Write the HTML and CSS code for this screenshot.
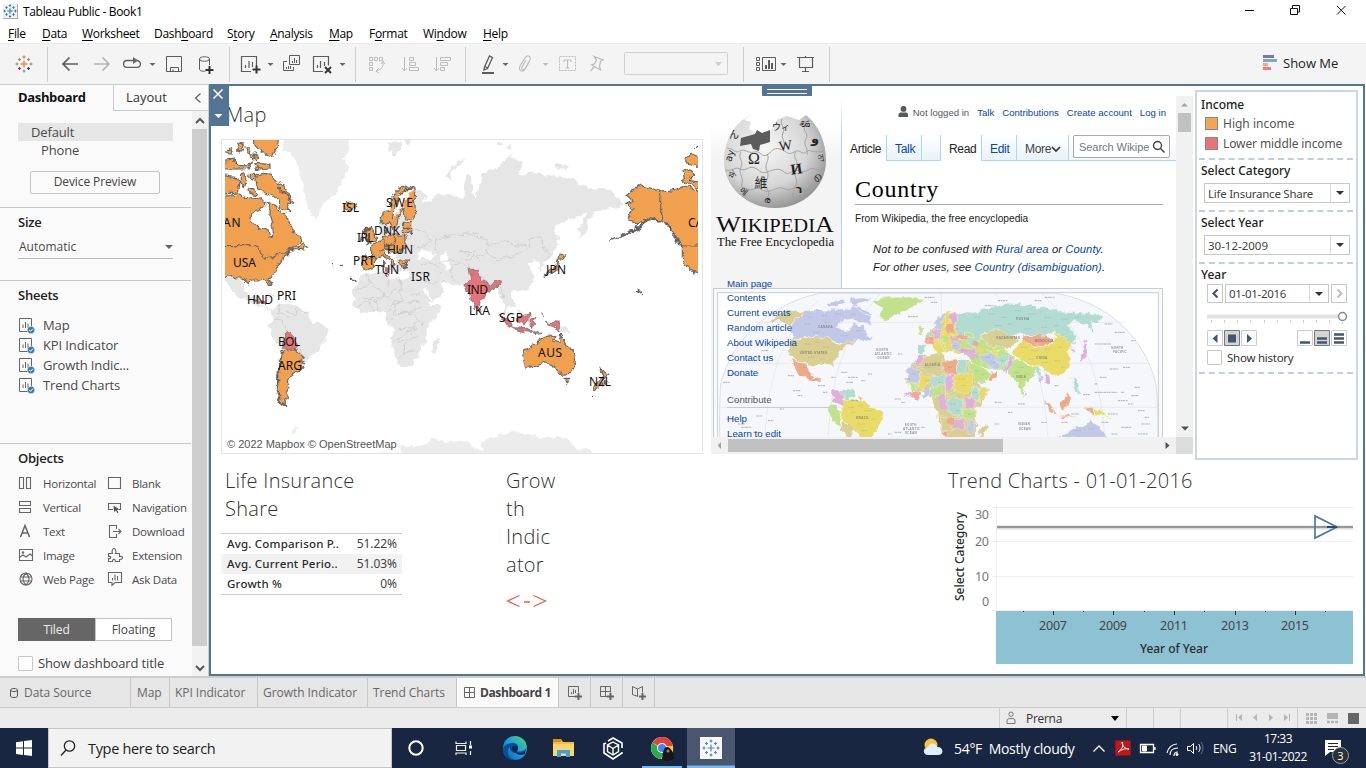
FILE: index.html
```html
<!DOCTYPE html>
<html lang="en">
<head>
<meta charset="utf-8">
<title>Tableau Public - Book1</title>
<link rel="stylesheet" href="styles.css">
</head>
<body>
<svg width="0" height="0" class="defs">
  <defs>
    <symbol id="plusmark" viewBox="0 0 18 18">
      <path d="M9 5.500v7M5.500 9h7M9 .5v3M7.500 2h3M9 14.500v3M7.500 16h3M2 7.500v3M.5 9h3M16 7.500v3M14.500 9h3M4.500 3v3M3 4.500h3M13.500 3v3M12 4.500h3M4.500 12v3M3 13.500h3M13.500 12v3M12 13.500h3"/>
    </symbol>
    <symbol id="sheet" viewBox="0 0 18 18">
      <path d="M1.500 1.500h12v13h-12zM5 11V7.500M7.500 11V5M10 11V6.500" fill="none" stroke="#666"/>
      <circle cx="13" cy="13" r="3.800" fill="#3a7ca5" stroke="#fafafa" stroke-width=".6"/>
      <path d="M11.300 13l1.300 1.300 2.200-2.500" fill="none" stroke="#fff"/>
    </symbol>
    <filter id="coast" x="0" y="0" width="1" height="1" color-interpolation-filters="sRGB"><feTurbulence type="fractalNoise" baseFrequency=".045" numOctaves="3" seed="4"/><feDisplacementMap in="SourceGraphic" scale="22" xChannelSelector="R" yChannelSelector="G"/></filter>
  </defs>
</svg>

<header class="titlebar">
  <span class="appicon"><svg width="14" height="14"><use href="#plusmark"/></svg></span>
  <span class="apptitle">Tableau Public - Book1</span>
  <svg class="winbtns" width="110" height="22" viewBox="1240 0 110 22"><path d="M1245 10.500h9M1290.500 8.500h7v6h-7zM1292.500 8v-2.500h7v6.500h-2M1337 6l8.500 8.500M1345.500 6l-8.500 8.500" fill="none" stroke="#111"/></svg>
</header>
<nav class="menubar"><span><u>F</u>ile</span><span><u>D</u>ata</span><span><u>W</u>orksheet</span><span>Dash<u>b</u>oard</span><span>S<u>t</u>ory</span><span><u>A</u>nalysis</span><span><u>M</u>ap</span><span>F<u>o</u>rmat</span><span>Wi<u>n</u>dow</span><span><u>H</u>elp</span></nav>

<div class="toolbar">
  <div class="tg g1"><svg width="18" height="18" viewBox="0 0 18 18" fill="none" stroke-width="1.200"><path d="M9 5.500v7M5.500 9h7" stroke="#eb8a44" stroke-width="1.500"/><path d="M9 .5v3M7.500 2h3M2 7.500v3M.5 9h3" stroke="#7199a6"/><path d="M4.500 3v3M3 4.500h3M13.500 3v3M12 4.500h3" stroke="#e8762d"/><path d="M4.500 12v3M3 13.500h3" stroke="#c72035"/><path d="M13.500 12v3M12 13.500h3" stroke="#1f457e"/><path d="M16 7.500v3M14.500 9h3M9 14.500v3M7.500 16h3" stroke="#7099a6"/></svg></div>
  <div class="tg g2"><svg width="181" height="40" viewBox="48 44 181 40" fill="none" stroke="#5c5c5c">
    <path d="M63 64h15M69.500 57.500L63 64l6.500 6.500" stroke-width="1.700"/>
    <path d="M94 64h15M102.500 57.500l6.500 6.500-6.500 6.500" stroke="#b5b5b5" stroke-width="1.700"/>
    <path d="M132 60.500h-5a3.400 3.400 0 0 0 0 6.800h10a3.400 3.400 0 0 0 0-6.800h-6" stroke-width="1.300"/><path d="M133 57l5 3.500-5 3.500z" fill="#666" stroke="none"/>
    <path d="M149.500 63h6l-3 3z" fill="#666" stroke="none"/>
    <path d="M166.500 56.500h15v15h-15zM170.500 71.500v-4h8v4M173 71.500v-2"/>
    <path d="M199.500 59v10c0 2 3 2.500 6 2M209.500 59v6M199.500 59c0-3 10-3 10 0s-10 3-10 0"/><path d="M209.500 66v8M205.500 70h8" stroke="#333" stroke-width="2"/></svg></div>
  <div class="tg g3"><svg width="125" height="40" viewBox="230 44 125 40" fill="none" stroke="#5c5c5c">
    <path d="M251 71.500h-9.500v-15h15v10M245.500 68v-3M249 68v-7M252.500 67v-5" stroke-width="1.200"/><path d="M256.500 65.500v8M252.500 69.500h8" stroke="#333" stroke-width="2"/>
    <path d="M267.500 63h6l-3 3z" fill="#666" stroke="none"/>
    <path d="M289.500 55.500h10v9h-10zM292.500 63v-2M294.500 63v-5M296.500 63v-3M287 61.500h-3.500v9h10V67M286.500 69v-2M288.500 69v-3M290.500 69v-3"/>
    <path d="M323 71.500h-9.500v-15h15v9M317.500 68v-3M320.500 68v-7M324.500 66v-4" stroke-width="1.200"/><path d="M325 67l6 6M331 67l-6 6" stroke="#333" stroke-width="1.900"/>
    <path d="M339.500 63h6l-3 3z" fill="#666" stroke="none"/></svg></div>
  <div class="tg g4"><svg width="109" height="40" viewBox="356 44 109 40" fill="none" stroke="#bdbdbd">
    <path d="M369.500 57.500h3v3h-3zM374.500 57.500h3v3h-3zM379.500 57.500h3v3h-3zM369.500 62.500h3v3h-3zM369.500 67.500h3v3h-3zM383 62c1 4-2 8-7 9M381 64l2-3 2 3M379 68l-3 3 3 2"/>
    <path d="M404.500 57v14M402 68l2.500 3 2.500-3M409.500 57.500h4v3h-4zM409.500 62.500h6v3h-6zM409.500 67.500h9v3h-9z"/>
    <path d="M436.500 57v14M434 68l2.500 3 2.500-3M440.500 57.500h10v3h-10zM440.500 62.500h7v3h-7zM440.500 67.500h4v3h-4z"/></svg></div>
  <div class="tg g5"><svg width="277" height="40" viewBox="466 44 277 40" fill="none" stroke="#bdbdbd">
    <path d="M484.500 67l5-11 3 1.500-5 11-3.500 1.500zM484.500 66l3 2" stroke="#5c5c5c" stroke-width="1.300"/><path d="M482 73h12" stroke="#5c5c5c" stroke-width="2"/>
    <path d="M502.500 63h6l-3 3z" fill="#666" stroke="none"/>
    <path d="M526 60l-4 7c-1 3 1.500 4 3 1.500l5-8.500c1.500-4-3-5.500-5-2l-5 8c-2 5 3 7 5.500 2.500l4-7.500" stroke-width="1.200"/>
    <path d="M542.500 63h6l-3 3z" fill="#bdbdbd" stroke="none"/>
    <path d="M559.500 56.500h16v14h-16z" stroke-dasharray="2 1"/><path d="M564 62v-2h7v2M567.500 60v8M565.500 68h4"/>
    <path d="M594 56.500l9 3.500-2.500 1.500-1 5 1 3.500-9-5 3-1 2-4zM594.500 66.500l-4 4.500" stroke-width="1.300"/>
    <rect x="624.500" y="52.500" width="103" height="22" rx="1" stroke="#d0d0d0"/><path d="M715 62h7l-3.500 4z" fill="#ccc" stroke="none"/></svg></div>
  <div class="tg g6"><svg width="85" height="40" viewBox="744 44 85 40" fill="none" stroke="#5c5c5c">
    <path d="M756.500 57.500h3v3h-3zM756.500 62.500h3v3h-3zM756.500 67.500h3v3h-3zM762.500 57.500h13v13h-13z"/><path d="M766 69v-4M769 69v-9M772 69v-6" stroke-width="2"/>
    <path d="M780.500 63h6l-3 3z" fill="#666" stroke="none"/>
    <path d="M797 57.500h17M805.500 56v1.500M799.500 58v9.500h13V58M805.500 67.500v4M802 71.500h7" stroke-width="1.200"/></svg></div>
  <div class="showme"><svg width="14" height="16"><path d="M0 1.500h11" stroke="#8074a0" stroke-width="3"/><path d="M0 5.500h14" stroke="#7ba7cc" stroke-width="3"/><path d="M0 9.500h5" stroke="#f9a57a" stroke-width="3"/><path d="M0 13.500h8" stroke="#fc7484" stroke-width="3"/></svg><span>Show Me</span></div>
</div>

<main class="work">
  <aside class="left">
    <div class="ltabs"><b>Dashboard</b><span>Layout</span><svg width="8" height="12"><path d="M6.500 1.500L1.500 6l5 4.500" fill="none" stroke="#666" stroke-width="1.300"/></svg></div>
    <div class="lbody">
      <div class="lcontent">
        <section class="devices"><div class="def">Default</div><div class="phone">Phone</div><button class="dp">Device Preview</button></section>
        <section class="size"><h3>Size</h3><div class="auto"><span>Automatic</span><i class="tri"></i></div></section>
        <section class="sheets"><h3>Sheets</h3>
          <div class="srow"><svg width="18" height="18"><use href="#sheet"/></svg><span>Map</span></div>
          <div class="srow"><svg width="18" height="18"><use href="#sheet"/></svg><span>KPI Indicator</span></div>
          <div class="srow"><svg width="18" height="18"><use href="#sheet"/></svg><span>Growth Indic...</span></div>
          <div class="srow"><svg width="18" height="18"><use href="#sheet"/></svg><span>Trend Charts</span></div>
        </section>
        <section class="objects"><h3>Objects</h3>
          <div class="ogrid">
            <svg width="16" height="16"><path d="M1.500 2.500h4v11h-4zM8.500 2.500h4v11h-4z"/></svg><span>Horizontal</span><svg width="16" height="16"><path d="M1.500 2.500h12v11h-12z"/></svg><span>Blank</span>
            <svg width="16" height="16"><path d="M1.500 2.500h11v4h-11zM1.500 9.500h11v4h-11z"/></svg><span>Vertical</span><svg width="16" height="16"><path d="M6 10.500H1.500v-6h12v6H12"/><path d="M6.500 6.500l6 4-2.500.5 1.500 2.500-1.200.6-1.300-2.600-2 1.500z" fill="#555" stroke="none"/></svg><span>Navigation</span>
            <svg width="16" height="16"><path d="M2.500 14L7 2.500 11.500 14M4 10h6" stroke-width="1.500"/></svg><span>Text</span><svg width="16" height="16"><path d="M9.500 6V2.500h-7v12h7V11M6 8.500h8M11.500 6l2.500 2.500L11.500 11"/></svg><span>Download</span>
            <svg width="16" height="16"><path d="M1.500 2.500h13v11h-13zM2 10l3-2 3 2 4-3 2.500 2"/><circle cx="5" cy="5.500" r=".7"/></svg><span>Image</span><svg width="16" height="16"><path d="M1.500 6.500h4c-1-2 0-5 1.500-5s2.500 3 1.500 5h4v3c4-1 4 3 0 3v2h-4c0-3-3-3-3 0h-4v-3c3 1 3-3 0-2z"/></svg><span>Extension</span>
            <svg width="16" height="16"><circle cx="8" cy="8" r="6"/><path d="M8 2c-4 4-4 8 0 12M8 2c4 4 4 8 0 12M2.500 6h11M2.500 10h11"/></svg><span>Web Page</span><svg width="16" height="16"><path d="M1.500 1.500h13v10H8l-3 3v-3H1.500zM5.500 9.500V7M8 9.500v-6M10.500 9.500V5"/></svg><span>Ask Data</span>
          </div>
          <div class="toggle"><span class="on">Tiled</span><span>Floating</span></div>
          <div class="sdt"><i class="cb"></i><span>Show dashboard title</span></div>
        </section>
      </div>
      <div class="lscroll"><svg width="10" height="7"><path d="M1 6l4-4 4 4" /></svg><i></i><svg width="10" height="7"><path d="M1 1l4 4 4-4"/></svg></div>
    </div>
  </aside>

  <div class="canvas">
    <div class="grip"><i></i><i></i></div>
    <div class="corner"><svg width="20" height="42"><path d="M4.500 5.500l9 9M13.500 5.500l-9 9" stroke="#fff" stroke-width="1.500"/><path d="M5.500 30h8l-4 4z" fill="#fff"/></svg></div>
    <div class="top">
      <section class="mapsec">
        <h2>Map</h2>
        <div class="mapbox">
<svg width="473" height="313" viewBox="225 140 473 313"><g transform="translate(220 95) scale(.33333)"><g filter="url(#coast)">
<path d="M-40 60h1560v1100h-1560z" fill="#fff"/>
<g fill="#e6e6e6">
<path d="M200 115l-12 50 22 5 22 30 4 40 14 20 8 60 17 40 17 18 8-38 40-40 22-30 23-55-13-25 18-30-5-45z" fill="#ececec"/>
<path d="M5 545l22-3 15 13 20 0 13 13 3 27 14 11 13-6 15 10-10 10 20 15 15 5 15 5-5 5-35-18-60-22-20-20-15-25z"/>
<path d="M125 588l28 4 18 12-22-6zM160 645l18-17 22 2 35 5 27 20 10 25 28 5 25 15-3 25-14 15-6 25-32 20-8 15-12 15-5 10-45 5-10-70-25-20-20-50 13-20z"/>
<path d="M418 545l22-10 60-5 2 20 28-2 15 7 25-5 30 5 10 35 20 40 32 0-7 25-35 45-2 40-18 20-8 30-17 22-35 5-12-27-16-50 8-40-20-20-2-25-28-7-40 7-30-25-2-40 14-30z"/>
<path d="M655 725l5 15-15 35-8-5 3-30zM505 150l25-15 12 5-5 25-15 22zM672 250l28-40 30-22 5 7-35 30-10 35zM550 130l28-2-8 20-18 0z"/>
<path d="M583 290l18-5 22 22-16 17 20-6 33-23 40 5 25 10 15-5-10-25 10-40 12-5 8 85 30-80 40-20 40-40 35 20-5 40 50-10 30 15 25-5 55 15 50 25 50 0 40 30 10 20-20 10-30 5-40 5-10 20-15 40-15 25-2-35 17-30 10-15-55 15-30 15-20 25 20 15-5 25-20 30-20 25-10 25-5-20-20-15-20 15 15 20 5 30-20 25-35 5-20 10 20 20-5 20-22-8 0 30 10 15-14-15-10-60-20-20-70-10-36 0-40-5-20-10 15 30-20 22-50 20-15-30-20-45-5-25-55-5 0-18 25-7-12-28-26-30-20 10 10-60 16-5z"/>
<path d="M1017 690l25 3 10 20-35-2zM833 137l20 0-5 12-15-3zM855 155l20-5-2 15-14-3zM1002 210l50 0-20 12-25-3zM895 640l12 10 10 18-15-5z"/>
<path d="M470 1100l0-25 60-28 60 12 60-27 25 8 55-2 60 32-10-30 40-10 25-16 80 2 30 8 80 5 35 30 40 6 25 35z" fill="#ececec"/>
<path d="M180 1075l35-8 10 8zM205 1020l12-15 25-12-18 20z" fill="#ececec"/>
</g>
<g fill="#fff"><path d="M592 480l15-18 40 18-15 12-38 0zM662 478l15-10 12 15-6 12 10 22-15 6-8-22-12-14zM1062 225l12 8-10 2zM610 590l28 24-20-40z"/></g>
<g fill="none" stroke="#cbcbcb" stroke-width="2.500">
<path d="M440 535l10 30-35 20M450 565l50 40 40-25M500 530l8 45M540 550l0 70 60 0M545 555l-3 35M430 610l50 0 20-20M415 640l30-25 20 35M465 615l10 30M500 655l30-35 20-5M525 655l50-5 30-15M530 620l-10 40M500 680l35-25 50 0 15 30 20 0M530 700l50 0 10-30M520 740l40-25 30-15M535 742l60-20M540 790l30-30 20 5M555 745l-5 35M570 600l30 0M560 435l20-25 30 0 20 20-15 25-40-5M565 385l15 20M650 470l-5-40 60-10 70-5M705 505l30 5 20-20M700 510l-10 25 20 30M605 550l30 15 40-5M605 505l40 0 15 30M650 500l60-5M715 470l40 0 30 30M740 480l25-15"/>
<path d="M720 413l30 0 15 12 20 0 10 12 15 15-20 25-30 5-12 12-25 0M810 452l45-18 20 14 50 4 5 5-30 20-50 15-35-5-18-25M925 450l5-20 28 0 12 30 18 15-15 25M745 505l30 35 40 28 30 5M838 575l10 30 10 10M870 590l5 20"/>
<path d="M178 630l0 25 30 10M200 650l30 10 0-20M150 690l25-25M160 670l25 5 15 35M235 650l30 5M225 740l25 40"/>
</g>
<g fill="#f0a04f" stroke="#686868" stroke-width="3.500" stroke-linejoin="round">
<path d="M-5 305l65-5 20 8 15-3 33 10 7 15-17 15-23 10-3 20 13 17 35 13 8 25 10-5-3-30 5-10-10-20 0-20-10-20 25 5 15 15 25 20 5 25 10 15 18 20 5 20-20 10-20 10 35-8 15-12 8 14-15 4-30 2-10 10-15 10-5 15-20 20-2 20-18 10 10 20-5 2-13-20-17 3-35 0-2 12-18-15-20 0-15-12-30 2z"/>
<path d="M-5 452l105 0 18 8 15 32 32-5 15-12 20-2M108 240l20-5 27 3 10 22 30 20 25 40-5 10-15-5 10 25-30-15-5-25-35-15-25-10-7-25zM98 115l78 0-4 45-12 18-10 7-25-15-17-15zM105 205l45 3 0 14-40 3zM-5 200l45-5 20 15 20 5 18-15-10 22-93 0zM50 145l20 5-8 18zM18 165l20-4-8 20zM75 155l12 5 3 18-12-5zM90 182l15 2-8 10zM-5 240l55 8 10 17-5 30-60 0zM62 235l18 10-10 30-10-15zM92 235l15 0-6 20-12-5zM85 275l15 0 10 25-20-5zM105 175l15 10-10 12z"/>
<path d="M484 370l6-20 20-5 5-35 20-25 25-15 25 5-2 35 5 45-13 20-22-5-5-30-13 25-5 30-12 5-13-20-15 10zM585 275l-20 8-25 15-15 35-5 45M440 400l10-5 10 15 8 25-23 12-5-22zM424 425l10-4-2 15-10 2zM550 385l25-3 0 36-25-6zM550 400l25 0M455 452l25-17 10-10 30-5 35 0 0 30-15 20-20 5-20-15 0 20 25 25-10 5-25-30-20 10-15-5zM490 425l5 35-20 15M520 420l0 25-25 10M427 485l43 5-10 25-25 7-8-12zM540 495l30 0-10 25-15-5zM488 495l5 15-5 5zM368 325l17-3 20-2 5 15-20 15-18-10zM495 405l8-10 0 22z"/>
<path d="M195 765l30 0 25 20-18 10 20 5-7 25-27 10-6 15-7 10 5 20-10 10 5 15-10 15 5 15-20-10-12-25 4-70 10-35z"/>
<path d="M908 775l2-10 35-15 15-20 20-10 25 2-5 18 15 8 7-30 13 27 30 35 2 15-17 40-25 3-20-18-10-12-25-8-35 15-17 5-6-20zM1032 850l14 0 0 10-7 5zM1140 820l14 10 12 5-8 16-6-11zM1145 845l10 8-25 32-7-3 8-18zM1018 475l16 8-8 9-12-1zM1015 493l2 15-7 20-30 12-5-3 25-14zM970 535l8 2-5 10z"/>
<path d="M1220 300l43-30 57 15 20 5 30-5 20-10 64 18 0 247-44-10-20-30 0-40-30-50-20-25-45-15-25 15-10 15-85 37 75-37 15-15-40-10 15-30-20-20 20-5zM1322 287l0 90M1386 453l68 0M1386 230l20-8 15 15-10 20 43 8 0 25-40-20-15-5-10-15zM1395 195l20-18 39 15 0 30-40-15-15-5zM1424 160l20-6 0 8z"/>
</g>
<g stroke="#5f5f5f" fill="none" stroke-width="6"><path d="M188 765l-8 40-8 40 0 50 10 25 20 17M540 300l15-20 28-3M175 280l25 20 18 25M1342 385l20 35 25 35M440 395l-2 20 12-25M550 505l15 12M1230 415l25-20 25-20M1275 372l40 5M560 500l5 20M390 550l10 5 10-2M340 508l5 0M360 514l5 2M200 480l10-15M1158 860l-12 15M1248 586l10 5 10 8M1115 905l4 3" stroke-dasharray="9 2"/></g>
<g fill="#e57377" stroke="#777" stroke-width="2.500">
<path d="M190 715l15-3 10 10 20 23-10 15-20 8-13-13zM495 515l10 0 3 15-6 15-7-15zM105 612l22 0 12 8-4 12-8-10-15 0z"/>
<path d="M750 520l20 0 5 20 15 20 20 5 2 20-17 15-15 20-5 20-10 5-15-55-15-5 5-20 15-10zM815 565l25-10 5 10-20 20-10-8zM775 645l6-3 2 10zM837 655l42 33 0 12-22-8zM880 698l35 2 25 8-5 4-35-3zM892 668l33-13 3 15-13 20-17-8zM930 670l22-4-14 10 6 12-8 10-6-16zM980 680l38 5 0 23-18-13-15-5zM943 710l22 2-20 4zM965 655l6 14"/>
</g></g></g>
<g class="maplabels"><text x="223" y="227" textLength="17.500">AN</text><text x="233" y="267" textLength="23">USA</text><text x="342" y="212" textLength="17">ISL</text><text x="386" y="207" textLength="27">SWE</text><text x="374" y="235" textLength="26">DNK</text><text x="357" y="242" textLength="16.500">IRL</text><text x="387" y="254" textLength="26">HUN</text><text x="353" y="265" textLength="22">PRT</text><text x="375" y="274" textLength="24">TUN</text><text x="411" y="281" textLength="19">ISR</text><text x="247" y="304" textLength="26">HND</text><text x="277" y="300" textLength="19">PRI</text><text x="278" y="346" textLength="22">BOL</text><text x="278" y="370" textLength="24">ARG</text><text x="467" y="294" textLength="21">IND</text><text x="469" y="315" textLength="21">LKA</text><text x="499" y="322" textLength="24">SGP</text><text x="546" y="274" textLength="20">JPN</text><text x="538" y="357" textLength="24">AUS</text><text x="589" y="386" textLength="22">NZL</text><text x="688" y="227">CA</text></g>
</svg>
          <span class="attr">© 2022 Mapbox © OpenStreetMap</span>
        </div>
      </section>

      <section class="wiki">
        <div class="wview">
          <div class="wside">
<svg width="130" height="170" viewBox="711 96 130 170">
<defs><radialGradient id="gl" cx=".4" cy=".35" r=".7"><stop offset="0" stop-color="#f7f7f7"/><stop offset=".6" stop-color="#d6d6d6"/><stop offset="1" stop-color="#8d8d8d"/></radialGradient></defs>
<path d="M751 115c-16 7-27 25-27 46a51 47 0 0 0 102 0c0-21-8-36-20-46l-7 5-12-4-9 3-7 11-12 5-10-6 2-7-7-2z" fill="url(#gl)"/>
<path d="M741 138l14-4 2-4 5 3 8-3 0 12-10 3-1 6-6-2-2-5-11 2z" fill="#5c5c5c"/>
<g fill="none" stroke="#a4a4a4"><path d="M727 148c8 1 8 6 13 3s8 3 14 1 8 6 13 3 6-8 13-6 8 7 14 3 8 4 12 0 7 2 18-1M725 170c8 2 9-4 15-1s9-4 15-1 6 6 12 4 12-5 17 0 9-4 16-1 9-5 15-2 8-2 10-2M740 190c6-4 8 2 14-1s9 4 16 2 9-5 15-2 9-4 16-1 10-2 14-2M741 152c-4 6 3 8 0 15s3 10 1 16 5 10 3 15M767 154c4 6-4 10 0 17s-5 12 0 18-3 10 3 17M796 152c-5 5 4 9 0 16s3 12 0 17-3 10-4 18M782 119c-3 6 4 8 1 14s4 8 0 16M806 124c-6 6 4 9 0 15s3 8 1 16"/></g>
<g font-family="DejaVu Sans, Noto Sans CJK SC, sans-serif" fill="#222" text-anchor="middle"><text x="754" y="164" font-family="Liberation Serif" font-size="16">Ω</text><text x="786" y="150" font-family="Liberation Serif" font-size="14" transform="rotate(-8 786 150)">W</text><text x="797" y="174" font-family="Liberation Serif" font-weight="bold" font-size="15" transform="rotate(-8 797 174)">И</text><text x="761" y="187" font-size="13" font-family="Noto Sans CJK SC">維</text><text x="799" y="193" font-size="11" font-weight="bold">ר</text><text x="781" y="130" font-size="9">ウィ</text><text x="804" y="127" font-size="10">ණ</text><text x="815" y="143" font-size="13" font-weight="bold">و</text><text x="731" y="158" font-size="10" transform="rotate(-75 731 156)">ay</text><text x="732" y="178" font-size="10" transform="rotate(60 732 174)">ক</text><text x="734" y="138" font-size="10">ん</text><text x="823" y="162" font-size="8" transform="rotate(80 823 158)">ਨਾ</text><text x="767" y="203" font-size="9">ര</text><text x="743" y="194" font-size="8" transform="rotate(40 743 192)">에</text><text x="818" y="181" font-size="9" transform="rotate(-60 818 178)">の</text></g>
<g font-family="Liberation Serif" fill="#111"><text x="716" y="232" font-size="23" textLength="118" lengthAdjust="spacingAndGlyphs">W<tspan font-size="18">IKIPEDI</tspan>A</text><text x="717" y="246" font-size="13.500" textLength="117" lengthAdjust="spacingAndGlyphs">The Free Encyclopedia</text></g></svg>
          </div>
          <div class="wmain">
            <div class="wuser"><svg width="11" height="11"><circle cx="5.500" cy="2.900" r="2.900"/><path d="M.5 11V9c0-3 2.500-2.500 5-2.500s4.500-.5 4.500 2.500v2z"/></svg><span>Not logged in</span><a>Talk</a><a>Contributions</a><a>Create account</a><a>Log in</a></div>
            <div class="wtabs"><span class="t1">Article</span><span class="t2 g">Talk</span><span class="t3 g"></span><span class="t4">Read</span><span class="t5 g">Edit</span><span class="t6 g">More<svg width="10" height="7"><path d="M1 1l4 4 4-4" fill="none" stroke="#333" stroke-width="1.700"/></svg></span><span class="t7 g"><i><em>Search Wikipe</em><svg width="13" height="13"><circle cx="5.500" cy="5.500" r="4" fill="none" stroke="#444" stroke-width="1.400"/><path d="M8.500 8.500l4 4" stroke="#444" stroke-width="1.500"/></svg></i></span></div>
            <h1>Country</h1>
            <p class="from">From Wikipedia, the free encyclopedia</p>
            <p class="hat h1x">Not to be confused with <a>Rural area</a> or <a>County</a>.</p>
            <p class="hat h2x">For other uses, see <a>Country (disambiguation)</a>.</p>
          </div>
          <div class="figure">
<svg width="464" height="153" viewBox="711 284 464 153"><g transform="translate(708 84) scale(.33333)">
<rect x="16.500" y="613.500" width="1347" height="500" fill="#f8f9fa" stroke="#c8ccd1" stroke-width="3"/><rect x="29" y="626" width="1322" height="500" fill="#fff" stroke="#c8ccd1" stroke-width="3"/>
<path d="M335 628C200 655 70 760 38 900c-4 60-4 120-2 200H1348c3-80 1-150-4-200C1310 760 1200 655 1044 628z" fill="#f5f7fa" stroke="#ccd2da" stroke-width="2"/>
<g fill="none" stroke="#dfe4ea" stroke-width="2"><path d="M60 838h1260M32 970h1320M130 715h1120M520 628c-110 110-150 250-160 440M700 628v440M860 628c100 110 150 250 160 440M1000 628c120 110 180 230 190 440M330 650c-120 110-150 250-160 420"/></g>
<g filter="url(#coast)"><path d="M9 600h1350v600H9z" fill="none"/>
<path d="M598 870l27-40 20-18 55-5 12 18 36 5 35-2 15 45 20 35 28 4-15 35-30 28 5 40-5 50-80 20-30-70-5-40-12-30-10-20-40 0-28-25z" fill="#d9cf92"/>
<path d="M700 690l45-5 30 60-10 40 10 15-25 15-15-10-30 0-15 15-10-25-20-25 10-30 25-20z" fill="#e8db68"/>
<path d="M745 740l70 10 60 40 50 30-10 25-20 20-30-10-60-10-25-25z" fill="#c1e28b"/>
<g stroke="#fff" stroke-width="1">
<g fill="#c2c8e8"><path d="M290 682l50-2 60-8 45 3 25 15 20 10-5 20-25-5-30-10-40 10-5 20 25 5 10 5 20-30 30 15 18 35-38 5-40 15-40-15-15-10-100 0-5-30 12-20zM345 655l50-8 20 8-40 12zM430 645l65-5-20 12-30 8 20 12-25-5zM425 668l40 5 30 22-15 0-30-15zM595 850l40 5-3 50-34-10zM677 720l13-20 20-15 4 5-20 25 5 15-15 8zM815 815l35-8 20 12 10 35-30-4-30-15zM811 885l35-5-30 18zM1060 1062l20-22 50-15 20-12 28 20 20 29zM990 870l12 5 0 25-10-5zM780 1010l22 0-8 35-14 5zM1085 790l16 8-6 12zM944 920l10 12-8 3z"/></g>
<g fill="#d9cf92"><path d="M180 715l35-25 30-12 45 4-32 33-13 10-30-13zM250 762l105-2 17 10 18 15 48-17-38 32-5 15-20 20 3 15-13-12-35 2-20 10-20-15-42-10-10-30zM815 755l45-20 40 7 32 23-27 25-35 5-30-15zM630 840l25-25 45-5 8 40-23 30-35-20zM698 1000l42 0 0 40-42 0zM815 1040l18-20 5 5-16 35zM400 1010l40 15 5 15-25 19-20-19z"/></g>
<g fill="#b2dcd1"><path d="M745 690l55-5 50-15 50-12 80 7 80 20 70 3 55 7-15 17-20 3 5 30-25-25-30-10-20 15 25 35-5 25-30-15-30-28-40 18-50-10-50 5-30-20-50 15-20 40-30-20-25-30zM395 915l40 5 5 15-25 15-15-15zM670 880l40-10 2 30-42 10zM746 826l31 2-3 42-28 0zM785 905l25 5 20 30-20 10-25-10zM715 945l50 0-5 55-45-20zM868 820l30-12 10 12-20 25-20-8zM1090 880l15 10 10 40-15-10zM625 785l28 0-10 27-15-2zM985 845l14 15-5 20-8-10z"/></g>
<g fill="#e8db68"><path d="M925 790l20-25 30 20 45 2 25-22-5-23 25 18 30 20-15 20 5 20 0 30-25 25-30-5-30-20-30-5-35-20-20-15zM398 985l12-35 30-5 30 5 15 15 45 25-10 25-20 35-10 10-40 0-10-30-40-25zM635 865l35 15-30 40-8-15zM736 870l54 0 0 50-40 10-14-20zM820 910l20 0 0 15-25 30 0-15zM700 745l25-6 5 18-25 2zM838 800l18-8 20 12-10 5zM715 685l10-5 5 20-12 30-10 0zM1156 975l20 0 30 28-25-8-22-5z"/></g>
<g fill="#c1e28b"><path d="M490 655l50-15 80 0 30 10-30 15-20 15-55 20-20 18-10-23 10-25zM905 835l30-10 35 25 25 0-10 15-20 15-15 20-10 32-15-37-20-20zM780 835l30 5 30 25 15 5-15 15-40 10zM665 910l40-2-5 27-30 0zM362 965l18 0 18 20-3 15 5 30-25-15zM598 900l34 8-20 18zM762 975l38 0 0 30-30 0zM850 785l30 0 16 12-30 5zM770 745l25 5 5 18-20-4zM712 925l30-4 0 14-30 5z"/></g>
<g fill="#edab8c"><path d="M248 828l42 10 15 22 15 25 20-5-5 15-35-5-28-15-10-20zM945 755l55 0 42 10-22 20-50-3-25-14zM700 830l44-5 0 50-34-15zM855 865l15-5-8 25-16 10-5-10zM733 750l40 0 8 20-35 0zM651 760l25-4 5 24-28 0zM1003 940l40 45 10 10-30-15zM1053 955l30-25 0 35-20 15zM1130 965l26 8 0 22-20-12zM455 940l10 2-5 12zM698 1042l20 0-5 18zM1010 990l40 8 60-5-40 10z"/></g>
<g fill="#e0b1d8"><path d="M372 915l23 0 15 35-5 15-30-10zM745 795l55-5 5 15-45 10zM890 850l15-30 12-8-2 25-20 35zM710 875l28-5-5 40-20 12zM770 945l35 5-10 25-25-5zM735 1005l40 0-5 30-35 0zM725 690l20-5 5 25-18 15zM1120 800l12-20 6 5-2 35-25 15zM1010 865l20 15-5 25-15-20zM615 840l20-28 20 2-25 30zM676 742l22-8 2 25-20 8zM600 935l30-10 10 15-25 5zM1127 765l12 5-5 10z"/></g>
<g fill="#c9e08f"><path d="M633 735l5-8 8 5-2 20-8 0zM690 768l10 2 15 28-5 5zM720 785l12-4 5 20-10-4z"/></g>
</g>
<g><path d="M590 930l15-6 8 12z" fill="#e0b1d8"/><path d="M612 925l18-4 2 18-15 4z" fill="#edab8c"/><path d="M645 915l22-3 3 25-22 4z" fill="#c2c8e8"/><path d="M690 935l18-5 8 40-15 15z" fill="#e0b1d8"/><path d="M718 1000l18 2 0 20-20 0z" fill="#edab8c"/><path d="M700 758l16-3 8 14-20 5z" fill="#c1e28b"/><path d="M722 758l22 0 4 16-22 2z" fill="#e0b1d8"/><path d="M658 748l15-6 3 12-16 2z" fill="#b2dcd1"/><path d="M735 776l24-2 2 18-24 3z" fill="#c2c8e8"/><path d="M712 728l25-5 5 18-28 4z" fill="#edab8c"/><path d="M800 770l12 5-4 12-14-6z" fill="#edab8c"/><path d="M808 790l18 2 8 18-22-6z" fill="#e8db68"/><path d="M780 808l25 0 5 15-26-2z" fill="#e0b1d8"/></g>
</g>
<g class="seam"><path d="M730 755l22 0M735 770l15 5M690 740l0 15M700 775l15 3M655 770l20 0M700 765l25 2 8 18M745 760l20 12M670 900l-8 35M640 920l28-8M620 905l12 25M712 900l0 50M765 935l0 60M740 1000l30 0M800 900l-15 45"/></g>
<g class="ticks"><path d="M45 895h20M70 870h16M80 950h14M55 1005h22M90 1020h20M100 1030h30M135 1045h24M160 800h22M165 820h18M240 875h18M255 920h24M215 975h14M145 996h18M180 1010h16M270 935h14M460 890h12M430 950h20M570 810h14M600 698h30M650 640h30M668 655h20M560 945h18M580 955h12M640 1030h12M590 885h16M400 865h18M420 880h30M415 895h20M330 905h22M370 880h12M345 925h14M480 870h12M830 665h26M870 650h30M980 650h22M1010 640h30M1190 720h24M1220 745h30M1160 780h50M1270 770h14M1205 855h26M1245 850h22M1280 910h16M1240 925h10M1270 935h20M1160 925h68M1125 932h22M1230 950h30M1290 980h20M1310 1000h14M1200 990h30M1260 960h16M1180 1015h22M1240 1030h30M1300 1020h26M1290 1050h30M1210 1050h18M900 985h14M860 955h20M930 960h22M860 1020h14M1000 1015h16M1090 990h24M1060 1015h18M1040 905h12M560 1045h20M540 1050h10M1175 880h20M1160 900h10"/></g>
<g class="ticks dim"><path d="M300 700h14M340 695h18M380 690h20M290 720h16M315 745h20M350 715h12M430 690h14M445 740h16M400 755h22M290 780h22M320 775h16M345 790h20M280 800h14M300 820h18M335 825h16M370 780h14M285 850h12M300 870h18M420 970h18M450 965h16M430 985h12M470 980h20M490 1005h14M450 1020h20M460 1040h18M800 700h18M840 690h22M880 700h16M920 680h20M960 690h24M1010 700h20M1060 705h20M1100 700h14M860 725h20M900 720h14M950 735h22M1000 730h18M1040 725h14M940 790h18M970 800h22M1010 795h18M1050 790h14M960 825h16M1000 835h20M1040 830h16M1060 850h12M930 850h18M950 870h12M920 865h16M800 860h16M820 870h12M750 885h22M760 905h14M650 850h18M680 835h16M720 850h14M610 870h14M650 890h16M690 895h12M725 960h18M745 980h12M790 925h18M780 990h14M650 915h12M640 935h12M755 750h14M700 720h10M720 700h8M740 735h14M665 770h10M690 750h12M710 765h14M735 785h12M760 800h18M830 820h16M850 835h14M880 830h12M1010 960h14M1065 955h10M1100 1040h20M1140 1035h18"/></g>
<g class="wlabels"><text x="330" y="733">CANADA</text><text x="275" y="809">UNITED STATES</text><text x="445" y="1004">BRAZIL</text><text x="925" y="708">RUSSIA</text><text x="985" y="825">CHINA</text><text x="865" y="765">KAZAKHSTAN</text><text x="980" y="773">MONGOLIA</text><text x="650" y="845">ALGERIA</text><text x="925" y="882">INDIA</text><text x="1210" y="795">NORTH</text><text x="1215" y="806">PACIFIC</text><text x="505" y="800">NORTH</text><text x="500" y="812">ATLANTIC</text><text x="508" y="824">OCEAN</text><text x="590" y="1025">SOUTH</text><text x="585" y="1037">ATLANTIC</text><text x="590" y="1049">OCEAN</text><text x="930" y="1024">INDIAN</text><text x="932" y="1037">OCEAN</text></g>
</g></svg>
          </div>
          <ul class="wnav"><li>Main page</li><li>Contents</li><li>Current events</li><li>Random article</li><li>About Wikipedia</li><li>Contact us</li><li>Donate</li><li class="hd">Contribute</li><li>Help</li><li>Learn to edit</li></ul>
        </div>
        <div class="vs"><svg width="17" height="17"><path d="M5 10.500h7L8.500 7z" fill="#a3a3a3"/></svg><i></i><svg width="17" height="17"><path d="M5 6.500h8l-4 4z" fill="#505050"/></svg></div>
        <div class="hs"><svg width="17" height="17"><path d="M10 5v7L6.500 8.500z" fill="#a3a3a3"/></svg><i></i><svg width="17" height="17"><path d="M6.500 5v7l4-3.500z" fill="#505050"/></svg></div>
        <div class="cn"></div>
      </section>

      <section class="filters">
        <div class="f1"><h4>Income</h4><p><i class="sw o"></i><span class="hi">High income</span></p><p><i class="sw r"></i><span class="lo">Lower middle income</span></p></div>
        <div class="f2"><h4>Select Category</h4><div class="sel"><span class="lis">Life Insurance Share</span><b><i class="tri k"></i></b></div></div>
        <div class="f2"><h4>Select Year</h4><div class="sel"><span>30-12-2009</span><b><i class="tri k"></i></b></div></div>
        <div class="f4"><h4>Year</h4>
          <div class="yr"><span class="bt"><svg width="9" height="11"><path d="M6.500 1.500l-4 4 4 4" fill="none" stroke="#3f5069" stroke-width="2"/></svg></span><div class="sel2"><span>01-01-2016</span><b><i class="tri k"></i></b></div><span class="bt"><svg width="9" height="11"><path d="M2.500 1.500l4 4-4 4" fill="none" stroke="#bbb" stroke-width="1.800"/></svg></span></div>
          <svg class="slider" width="142" height="20"><path d="M0 8.500h138" stroke="#e3e3e3" stroke-width="4"/><circle cx="135.500" cy="8.500" r="4" fill="#fff" stroke="#888" stroke-width="1.500"/><path d="M4.500 12v3M17.500 12v3M30.500 12v3M43.500 12v3M57.500 12v3M70.500 12v3M83.500 12v3M96.500 12v3M109.500 12v3M122.500 12v3M135.500 14v2" stroke="#ccc"/></svg>
          <div class="play"><svg width="140" height="17" fill="none" stroke="#ccc"><path d="M.5.5h15v15H.5zM34.500.5h15v15h-15zM90.500.5h15v15h-15zM124.500.5h15v15h-15z" fill="#fff"/><path d="M17.500.5h15v15h-15zM107.500.5h15v15h-15z" fill="#d4d4d4" stroke="#777"/><path d="M10.500 4v9L5.500 8.500zM40 4v9l5-4.500zM21 4.500h8v8h-8z" fill="#44566f" stroke="none"/><path d="M93 12.500h10M110 8.500h10M110 12.500h10M127 4.500h10M127 8.500h10M127 12.500h10" stroke="#44566f" stroke-width="2.600"/></svg></div>
          <div class="hist"><i class="cb"></i><span>Show history</span></div>
        </div>
      </section>
    </div>

    <div class="bottom">
      <section class="kpi"><h2>Life Insurance<br>Share</h2>
        <table><tr><td class="n1">Avg. Comparison P..</td><td>51.22%</td></tr><tr class="alt"><td class="n1">Avg. Current Perio..</td><td>51.03%</td></tr><tr><td class="n2">Growth %</td><td>0%</td></tr></table></section>
      <section class="growth"><h2>Grow<br>th<br>Indic<br>ator</h2><svg width="42" height="14" fill="none" stroke="#e8604c" stroke-width="1.300"><path d="M13.500 1.500L1.500 7l12 5.500M27.500 1.500l12 5.500-12 5.500M18 8h6"/></svg></section>
      <section class="trend"><h2>Trend Charts - 01-01-2016</h2>
<svg width="405" height="165" viewBox="948 500 405 165">
<path d="M992 507.500h361M992 541.500h361M992 576.500h361M996.500 505v105M992 610.500h361" stroke="#efefef"/>
<rect x="996" y="611" width="357" height="53" fill="#8dc2d2"/>
<path d="M997 527.500h356" stroke="#dcdcdc" stroke-width="4"/><path d="M997 527h356" stroke="#979797" stroke-width="2"/>
<path d="M1315 516v22l22-11z" fill="none" stroke="#4e79a7" stroke-width="1.700"/><path d="M1327 527h10" stroke="#2c4a6b" stroke-width="2"/>
<path d="M1053.500 611v4M1113.500 611v4M1174.500 611v4M1235.500 611v4M1295.500 611v4M1023.500 611v1M1083.500 611v1M1144.500 611v1M1204.500 611v1M1265.500 611v1M1325.500 611v1" stroke="#333"/>
<g class="axis"><text x="975" y="519" textLength="14">30</text><text x="975" y="546" textLength="14">20</text><text x="975" y="581" textLength="14">10</text><text x="982" y="606">0</text></g>
<g class="axis dk"><text x="1039" y="630" textLength="28">2007</text><text x="1099" y="630" textLength="28">2009</text><text x="1160" y="630" textLength="28">2011</text><text x="1221" y="630" textLength="28">2013</text><text x="1281" y="630" textLength="28">2015</text></g>
<text class="axt" x="1140" y="653" textLength="68">Year of Year</text><text class="axt" transform="translate(964 601) rotate(-90)" textLength="89">Select Category</text></svg></section>
    </div>
  </div>
</main>

<div class="tabs"><span class="ds"><svg width="10" height="12"><path d="M1.500 3v6c0 2 7 2 7 0V3c0-2-7-2-7 0s7 2 7 0" fill="none" stroke="#555"/></svg>Data Source</span><span>Map</span><span>KPI Indicator</span><span>Growth Indicator</span><span>Trend Charts</span><span class="act"><svg width="12" height="12"><path d="M.5.5h10v10H.5zM5.500.5v10M.5 5.500h10" fill="none" stroke="#666"/></svg><b>Dashboard 1</b></span>
<span class="ic"><svg width="18" height="18"><path d="M9 12.500H2.500v-10h10v6M5.500 10V8M7.500 10V5M9.500 9V6"/><path d="M12.500 9v7M9 12.500h7" stroke-width="2"/></svg></span><span class="ic"><svg width="18" height="18"><path d="M9 12.500H2.500v-10h10v6M7.500 2.500v10M2.500 7.500h10"/><path d="M12.500 9v7M9 12.500h7" stroke-width="2"/></svg></span><span class="ic"><svg width="18" height="18"><path d="M8 12.500l-5.500-2v-8L7.500 5l5-2.500v6M7.500 5v7"/><path d="M12.500 9v7M9 12.500h7" stroke-width="2"/></svg></span></div>
<div class="status"><span class="user"><svg width="10" height="14"><circle cx="5" cy="3.200" r="2.200"/><path d="M1 12.500V10c0-2 1-2.500 4-2.500s4 .5 4 2.500v2.500z"/></svg><em>Prerna</em><i class="tri bk"></i></span><span></span><span></span><span></span>
<span class="nv"><svg width="70" height="19" viewBox="0 0 70 19" fill="#b5b5b5"><path d="M8 6v7h1V6zM14 6v7l-4-3.500zM29 6v7l-4-3.500zM41 6v7l4-3.500zM56 6v7l4-3.500zM61 6v7h1V6z"/></svg></span>
<svg width="65" height="19" viewBox="0 0 65 19"><path d="M8 5.500h11M8 9.500h11M8 13.500h11" stroke="#b5b5b5" stroke-width="3" stroke-dasharray="3 1"/><path d="M29 4h11v6H29z" fill="#b5b5b5"/><path d="M29 13h11" stroke="#b5b5b5" stroke-width="2.500" stroke-dasharray="3 1"/><path d="M50 4h11v11H50z" fill="#666"/></svg></div>

<footer class="taskbar">
  <div class="start"><svg width="16" height="16" fill="#fff"><path d="M0 2.200L7 1.200v6.400H0zM8 1.100L16 0v7.600H8zM0 8.600h7v6.300L0 14zM8 8.600h8V16l-8-1z"/></svg></div>
  <div class="search"><svg width="18" height="18"><circle cx="10.500" cy="7" r="5.200" fill="none" stroke="#222" stroke-width="1.300"/><path d="M7 11l-5 5.500" stroke="#222" stroke-width="1.300"/></svg><span>Type here to search</span></div>
  <svg class="apps" width="343" height="40" viewBox="392 728 343 40">
    <defs><linearGradient id="ed" x1="0" y1="1" x2="1" y2="0"><stop offset="0" stop-color="#0c59a4"/><stop offset=".5" stop-color="#1b9de2"/><stop offset="1" stop-color="#4fdb6a"/></linearGradient></defs>
    <circle cx="416" cy="748" r="6.700" fill="none" stroke="#fff" stroke-width="2"/>
    <path d="M456 741.500v2h10v-2M456 755v-2h10v2M456.500 745.500h9v5h-9zM470.500 741v4M470.500 751v4" fill="none" stroke="#eee" stroke-width="1.200"/><path d="M469 745.500h3v3h-3z" fill="#fff"/>
    <circle cx="515" cy="748" r="12" fill="url(#ed)"/><path d="M503 749c2-7 15-8 15-2 0 2-1 3-2 4 6 2 11-2 11-5-1 8-8 8-11 7-4 0-7-3-6-6-4 3-3 11 5 13-8 1-13-6-12-11z" fill="#0a4f96"/><path d="M512 748c0-3 6-3 6 0 0 2-1 3-2 4-3 0-4-2-4-4z" fill="#192642"/><path d="M515 752c5 2 10 1 11-3l-1 5c-4 2-8 1-10-2z" fill="#192642"/>
    <path d="M553 739h8l2 3h11v14h-21z" fill="#f5bd3d"/><path d="M553 744h21v12h-21z" fill="#fdd66b"/><path d="M557 757v-7h13v7h-4v-3.500h-5v3.500z" fill="#3f9fe0"/><path d="M553 739h8v3h-8z" fill="#d99117"/>
    <path d="M608 741l5-3 9 5v5M622 752v1l-9 6-9-6v-9l2-1M604 743v10" fill="none" stroke="#fff" stroke-width="1.600"/><path d="M613 742l5.500 3v6.500l-5.500 3.500-5.500-3.500V745zM607.500 745l5.500 3.500 5.500-3.500M613 748.500v6" fill="none" stroke="#fff" stroke-width="1.400"/>
    <circle cx="662" cy="748" r="11" fill="#fff"/><path d="M662 748L652.500 742.500A11 11 0 0 1 673 747z" fill="#e34133"/><path d="M652.500 742.500A11 11 0 0 0 661 759l4-8z" fill="#2da94f"/><path d="M673 746a11 11 0 0 1-12 13l5-9-1-4z" fill="#fcc934"/><circle cx="662" cy="748" r="5" fill="#fff"/><circle cx="662" cy="748" r="4" fill="#4286f4"/><path d="M662 759c1-5 1-12 5-12s7 7 7 11c-2 4-10 4-12 1z" fill="#16151a"/><circle cx="668" cy="751" r="1.500" fill="#b17d6a"/>
    <path d="M642 766h40v2h-40z" fill="#76b9ed"/>
    <path d="M687 728h48v40h-48z" fill="#4a556f"/><path d="M687 765.500h48v2.500h-48z" fill="#76b9ed"/><path d="M700 737h22v22h-22z" fill="#f5f7f9"/><svg x="702" y="739" width="18" height="18" stroke="#5688b0" stroke-width="1.200" viewBox="0 0 18 18"><use href="#plusmark"/></svg>
  </svg>
  <svg class="wx" width="24" height="24"><circle cx="9" cy="9" r="6.500" fill="#fdc33c"/><path d="M6 19c-5 0-6-7 0-8 2-5 8-4 9 0 6-1 8 8 1 8z" fill="#dfeefb"/></svg>
  <span class="temp">54°F&nbsp; Mostly cloudy</span>
  <svg class="tray" width="116" height="40" viewBox="1090 728 116 40" fill="none" stroke="#fff"><path d="M1093.500 751.500l5.500-5.500 5.500 5.500" stroke-width="1.300"/><rect x="1116" y="741" width="14" height="14" fill="#c91414" stroke="#c91414"/><path d="M1118 752c4-2 6-7 4-10 0 4 3 7 7 7-4-1-8 1-11 3z"/><path d="M1140.500 744.500h13v8h-13zM1155 747v3" stroke-width="1.300"/><path d="M1142.500 746h4v5h-4z" fill="#fff"/><path d="M1167 753c1-5 5-9 10-9M1170 755c0-4 3-7 8-7M1174 756c0-3 2-4 4-4" stroke-width="1.200"/><circle cx="1177" cy="754.500" r="1" fill="#fff"/><path d="M1187.500 746.500h3l3-3v10l-3-3h-3zM1196 746c1 1 1 3 0 4M1198.500 744c2 2 2 6 0 8"/><path d="M1201 742c2.500 3 2.500 9 0 12" stroke="#66718a"/></svg>
  <span class="eng">ENG</span>
  <span class="clock"><span class="tm">17:33</span><span>31-01-2022</span></span>
  <svg class="notif" width="30" height="40" viewBox="1322 728 30 40"><path d="M1325 740h16v12h-11l-5 4z" fill="#fff"/><path d="M1328 743.500h10M1328 746.500h10M1328 749.500h6" stroke="#192642"/><circle cx="1340.500" cy="755.500" r="8" fill="#2b2f38" stroke="#9aa0ac"/><text x="1340.500" y="759.500" text-anchor="middle">3</text></svg>
</footer>
</body>
</html>
```

FILE: styles.css
```css
*{box-sizing:border-box}
body{margin:0;width:1366px;height:768px;overflow:hidden;display:flex;flex-direction:column;background:#fff;font-family:"Open Sans","Noto Sans",sans-serif;font-size:12px;color:#333}
h1,h2,h3,h4,p,ul{margin:0;padding:0;font-weight:normal}
i,em{font-style:normal}
svg{display:block;flex:none}
.defs{height:0;width:0}
.tri{border:4px solid transparent;border-top:4px solid #666;border-bottom:0;display:block}
.tri.k{border-top-color:#333}
.tri.bk{border-top:5px solid #000}
.cb{width:15px;height:15px;border:1px solid #c8c8c8;background:#fff;border-radius:1px}

.titlebar{height:22px;display:flex;align-items:center;padding-left:3px;color:#000}
.appicon{width:15px;height:15px;background:#f0f0f0;border-right:1px solid #aaa;border-bottom:1px solid #aaa;stroke:#2e7dab;stroke-width:1.4}
.apptitle{margin-left:5px;letter-spacing:-.33px;padding-top:1px}
.winbtns{margin-left:auto;margin-right:16px}
.menubar{height:21px;padding-top:2px;display:grid;grid-template-columns:34px 40px 72px 73px 43px 59px 40px 54px 60px 60px;padding-left:8px;align-items:center;color:#000;letter-spacing:-.32px;white-space:nowrap}
.menubar u{text-underline-offset:2px}
.toolbar{height:41px;background:#f4f4f4;display:flex;align-items:center;border-top:1px solid #eaeaea}
.tg{height:35px;border-right:1px solid #cdcdcd;display:flex;align-items:center}
.g1{width:48px;padding-left:15px}.g2{width:182px}.g3{width:126px}.g4{width:110px}.g5{width:278px}.g6{width:86px}
.showme{margin-left:433px;display:flex;gap:6px;align-items:center;font-size:13px;color:#222;margin-top:-2px}

.work{height:592px;display:flex}
.left{width:209px;background:#fafafa;border-top:1px solid #ccc;border-right:1px solid #ccc}
.ltabs{height:26px;display:flex;font-size:13px;line-height:25px}
.ltabs b{width:113px;padding-left:18px;color:#111;letter-spacing:-.35px}
.ltabs span{width:80px;padding-left:12px;border-left:1px solid #ccc;border-bottom:1px solid #ccc;color:#333}
.ltabs svg{width:15px;height:26px;padding:7px 0 7px 1px;border-bottom:1px solid #ccc}
.lbody{display:flex;height:565px}
.lcontent{width:191px;color:#4a4a4a}
.lcontent section{border-bottom:1px solid #c8c8c8;padding-left:18px}
.lcontent h3{font-size:13px;font-weight:600;color:#222;line-height:18px;letter-spacing:-.25px}
.devices{height:97px;padding-top:12px;font-size:13px}
.devices div{line-height:18px;letter-spacing:-.15px}
.def{background:#e6e6e6;width:155px;padding-left:13px}
.phone{padding-left:23px}
.dp{margin:12px 0 0 12px;width:130px;height:23px;border:1px solid #c4c4c4;border-radius:2px;background:#fafafa;font:12px "Open Sans",sans-serif;color:#444;display:block;padding:0 0 2px;letter-spacing:-.1px}
.size{height:73px;padding-top:5px}
.auto{width:155px;height:26px;margin-top:2px;padding-top:2px;border-bottom:1px solid #bbb;display:flex;justify-content:space-between;align-items:center;padding-left:1px}
.sheets{height:163px;padding-top:5px}
.sheets h3{margin-bottom:11px}
.srow{height:20px;display:flex;align-items:center;font-size:13px;gap:7px;letter-spacing:-.12px}
.srow svg{margin-top:2px}
.objects{height:232px;padding-top:5px;border:0!important}
.ogrid{display:grid;grid-template-columns:25px 64px 25px 64px;grid-auto-rows:24px;margin-top:4px;align-items:center;font-size:11.500px;white-space:nowrap;letter-spacing:-.25px}
.ogrid svg{fill:none;stroke:#666;stroke-width:1.1}
.toggle{display:flex;width:154px;height:23px;margin-top:27px}
.toggle span{flex:1;border:1px solid #c4c4c4;text-align:center;line-height:21px;background:#fff;color:#444;letter-spacing:-.1px}
.toggle .on{background:#666;border-color:#666;color:#eee}
.sdt{display:flex;align-items:center;gap:5px;margin-top:13px;font-size:13px;letter-spacing:-.12px;color:#444}
.lscroll{width:16px;margin-left:1px;background:#f2f2f2;display:flex;flex-direction:column;align-items:center;padding:6px 1px 4px 0}
.lscroll svg{fill:none;stroke:#555;stroke-width:2}
.lscroll i{width:15px;flex:1;background:#cdcdcd;margin:5px 0 19px}

.canvas{width:1156px;height:592px;border:2px solid #547494;background:#fff;position:relative}
.grip{position:absolute;left:551px;top:-2px;width:50px;height:13px;background:#547494;border-radius:0 0 2px 2px;padding:5px 5px 0}
.grip i{display:block;height:1px;background:#fff;margin-bottom:3px}
.corner{position:absolute;left:-2px;top:-2px;width:20px;height:42px;background:#547494}
h2{font-size:20px;font-weight:300;line-height:28px;color:#333;letter-spacing:.28px}
.top{display:grid;grid-template-columns:482px 482px 163px;column-gap:8px;padding-left:10px;height:374px}
.mapsec{padding-top:15px}
.mapsec h2{padding-left:5px;height:38px}
.mapbox{width:482px;height:315px;border:1px solid #e4e4e4;padding:0 0 0 3px;position:relative}
.attr{position:absolute;left:2px;bottom:0;background:rgba(255,255,255,.75);font:11px/18px "Liberation Sans",sans-serif;color:#555;padding:0 4px 0 3px}
.maplabels{font:12px "Noto Sans",sans-serif;fill:#111}
.wiki{margin-top:10px;height:358px;display:grid;grid-template:341px 17px/465px 17px;font-family:"Liberation Sans",sans-serif}
.wview{position:relative;overflow:hidden;display:flex;background:#fff}
.wside{width:131px;background:linear-gradient(#fff 30px,#f4f4f4 60px);border-right:1px solid #a7d7f9;position:relative}
.wside:after{content:"";position:absolute;right:-1px;top:0;width:1px;height:40px;background:linear-gradient(#fff,#a7d7f9)}
.wmain{flex:1}
.wmain a{color:#0645ad}
.wuser{display:flex;font-size:9.600px;line-height:13px;padding:10px 10px 0 0;justify-content:flex-end;gap:8px;color:#54595d;height:39px}
.wuser svg{fill:#54595d;margin-right:-4px}
.wtabs{display:flex;height:26px;font-size:12px;line-height:29px;letter-spacing:-.3px;border-bottom:1px solid #a7d7f9;color:#222}
.wtabs>span{padding:0 0 0 8px;border-right:1px solid #a7d7f9;height:25px;white-space:nowrap}
.wtabs .g{background:linear-gradient(#fff,#e8f2f8)}
.wtabs .t1,.wtabs .t4{height:26px;background:#fff}
.t1{width:45px}.t2{width:35px;color:#0645ad}.t3{width:19px}.t4{width:41px}.t5{width:35px;color:#0645ad}.t6{width:52px;display:flex;align-items:center;color:#444;padding-top:3px!important}.t7{flex:1;padding:0 0 0 4px!important;border:0!important}
.t7.g{background:linear-gradient(#fff,#f6f6f6)!important}
.t7 i{display:flex;align-items:center;gap:3px;width:97px;height:23px;border:1px solid #a2a9b1;border-radius:2px;background:#fff;padding-left:5px;font-size:11px;line-height:20px;color:#72777d}
.t7 i em{width:70px;letter-spacing:-.05px}
.wmain h1{font:24px/30px "Liberation Serif",serif;color:#000;margin:13px 13px 0 13px;height:31px;border-bottom:1px solid #a2a9b1;letter-spacing:.75px}
.from{font-size:10.200px;line-height:14px;padding:7px 0 0 13px;color:#202122}
.hat{font-size:11.200px;line-height:18px;font-style:italic;padding-left:31px;color:#202122;white-space:nowrap;letter-spacing:.1px}
.h1x{margin-top:14px}
.figure{position:absolute;left:0;top:188px}
.ticks{stroke:#7f8f8c;stroke-width:3;stroke-dasharray:7 2 4 1;opacity:.65}
.dim{opacity:.45;stroke-width:2}
.seam{stroke:#fff;stroke-width:1.500;fill:none;opacity:.6}
.wlabels{font:bold 9px "Liberation Sans",sans-serif;fill:#667;letter-spacing:1px;opacity:.7}
.wnav{position:absolute;left:16px;top:180px;list-style:none;font-size:9.700px;line-height:15px;color:#0645ad}
.wnav li:first-child{height:14px}
.wnav .hd{color:#54595d;margin:12px 0 3px;height:16px;border-bottom:1px solid #c8ccd1;width:110px}
.vs{background:#f1f1f1;display:flex;flex-direction:column;align-items:center}
.vs i{width:13px;height:19px;background:#c1c1c1;margin-bottom:auto}
.hs{background:#f1f1f1;display:flex;align-items:center}
.hs i{height:13px;width:275px;background:#c1c1c1;margin-right:auto}
.cn{background:#dcdcdc}
.filters{margin:4px 0 0 -6px;width:163px;height:370px;border:2px solid #c9d6e3;padding:4px 3px 0 2px;font-family:"Noto Sans",sans-serif}
.filters>div{border-bottom:2px dashed #bfcee4;padding-left:2px}
.filters h4{font-size:12px;line-height:16px;color:#222;font-weight:500;padding-top:1px}
.f1{height:64px}
.f1 p{display:flex;height:20px;align-items:center;gap:5px;color:#555;padding:1px 0 0 4px;font-size:12px;white-space:nowrap}
.lo{letter-spacing:-.1px}
.sw{width:13px;height:13px;border:1px solid #888}.o{background:#f5a354}.r{background:#e87478}
.f2{height:52px;padding-top:2px}
.sel,.sel2{display:flex;align-items:center;border:1px solid #c8c8c8;color:#444;font-size:11.500px;white-space:nowrap}
.sel{width:146px;height:20px;margin:4px 0 0 3px;padding-left:3px}
.sel b,.sel2 b{height:100%;width:19px;border-left:1px solid #ddd;margin-left:auto;display:flex;align-items:center;justify-content:center}
.lis{letter-spacing:-.25px}
.f4{height:110px;padding-top:2px}
.yr{display:flex;gap:2px;padding:1px 0 0 6px}
.sel2{width:104px;height:19px;padding-left:3px;letter-spacing:-.3px}
.bt{width:16px;height:19px;border:1px solid #c8c8c8;display:flex;align-items:center;justify-content:center}
.slider{margin:5px 0 0 6px}
.play{margin:2px 0 0 6px}
.hist{display:flex;align-items:center;gap:5px;margin:3px 0 0 6px;font-size:11.500px;line-height:15px;letter-spacing:-.25px}
.bottom{display:grid;grid-template-columns:281px 442px 1fr;padding:7px 10px 0 14px}
.kpi table{margin:10px 0 0 -4px;width:181px;border-collapse:collapse;border-top:1px solid #ccc;border-bottom:1px solid #ccc;font:12px/20px "Noto Sans",sans-serif;color:#444}
.kpi td{padding:0 5px 0 0;height:20px;text-align:right;white-space:nowrap;letter-spacing:-.05px}
.kpi td:first-child{text-align:left;font-weight:500;font-size:11.500px;padding-left:6px;color:#2c2c2c;letter-spacing:.2px}
.kpi .alt{background:#f2f2f2}
.growth svg{margin-top:15px}
.trend h2{white-space:nowrap}
.trend svg{margin-top:5px}
.axis{font:12.500px "Noto Sans",sans-serif;fill:#777}
.dk{fill:#444}
.axt{font:500 12px "Noto Sans",sans-serif;fill:#2c2c2c}

.tabs{height:32px;background:#e6e6e6;border-top:2px solid #ccc;border-bottom:1px solid #ccc;display:flex;line-height:29px;color:#666;letter-spacing:-.05px}
.tabs span{border-right:1px solid #c8c8c8;padding-left:6px;height:29px;width:88px;white-space:nowrap}
.tabs .ds{width:131px;display:flex;align-items:center;padding-left:9px;gap:5px}
.tabs span:nth-child(2){width:39px}
.tabs span:nth-child(3){padding-left:5px}
.tabs span:nth-child(4){width:110px;padding-left:5px}
.tabs span:nth-child(5){width:89px;padding-left:5px}
.tabs .act{width:102px;background:#fafafa;display:flex;align-items:center;gap:4px;color:#444;padding-left:7px;line-height:27px}
.tabs .act b{letter-spacing:-.4px}
.tabs .ic{width:32px;display:flex;align-items:center;padding-left:7px}
.ic svg{fill:none;stroke:#666}
.status{height:20px;background:#ebebeb;display:flex;align-items:center;padding-left:999px}
.status>span{height:20px;border-left:1px solid #ccc;width:27px}
.status .user{width:127px;display:flex;align-items:center;padding:0 7px 0 6px}
.user svg{fill:none;stroke:#777}
.user em{margin-left:10px;letter-spacing:-.3px;margin-right:auto}
.status .user+span+span+span{width:47px}
.status .nv{width:71px;border-right:1px solid #ccc}
.taskbar{height:40px;background:#192642;display:flex;align-items:center;color:#fff;white-space:nowrap}
.start{width:48px;padding-left:16px}
.search{width:344px;height:40px;background:#f2f2f2;border:1px solid #c4c4c4;display:flex;align-items:center;color:#222;font-size:14.500px;gap:11px;padding-left:10px;letter-spacing:-.32px}
.wx{margin-left:187px}
.temp{font-size:14px;letter-spacing:-.3px;margin-left:8px;width:136px;padding-top:1px}
.eng{font-size:12px;letter-spacing:-.4px;margin-left:7px;width:35px}
.clock{width:60px;display:flex;flex-direction:column;line-height:18px;text-align:center;letter-spacing:-.5px;font-size:12px}
.notif{margin-left:14px;font-size:11px;fill:#fff}
```
